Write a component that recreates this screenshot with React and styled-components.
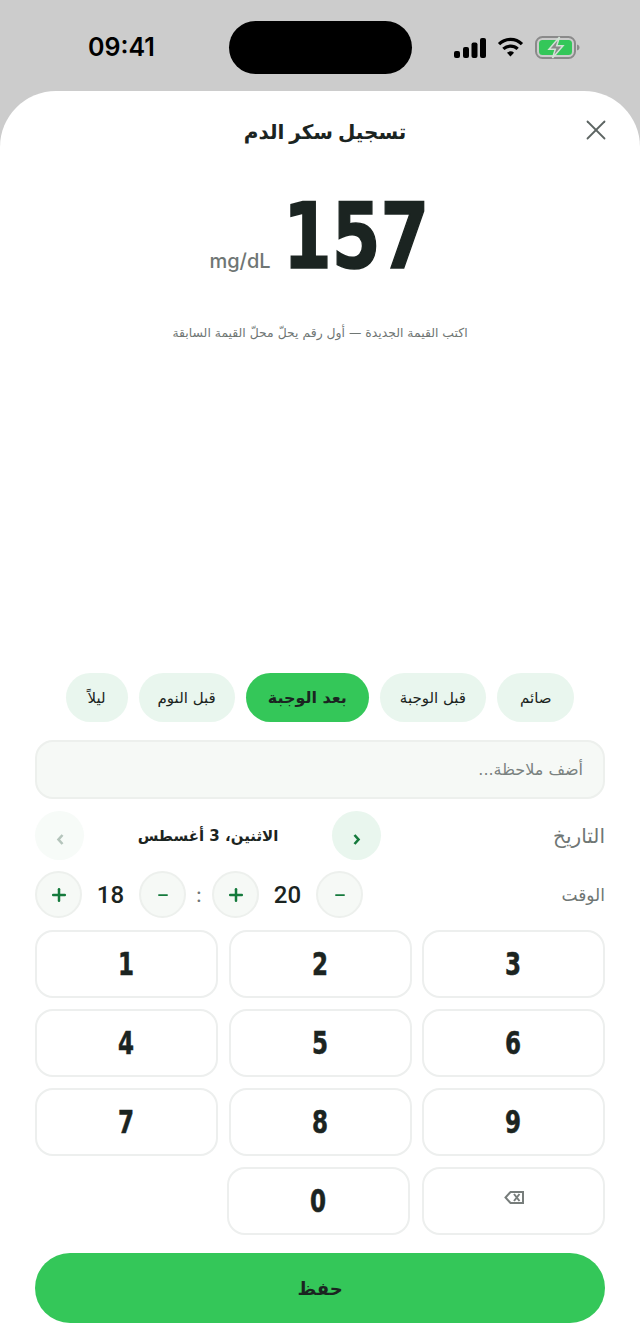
import React from "react";
import styled, { createGlobalStyle } from "styled-components";
import { X, Plus, Minus } from "lucide-react";

const GlobalStyle = createGlobalStyle`
  * { box-sizing: border-box; }
  html, body { margin: 0; padding: 0; background: #cccccc; }
  body { font-family: "DejaVu Sans", "Noto Sans", sans-serif; }
`;

const Screen = styled.div`
  width: 640px;
  height: 1343px;
  background: #cccccc;
  display: flex;
  flex-direction: column;
  overflow: hidden;
`;

const StatusBar = styled.div`
  height: 91px;
  flex-shrink: 0;
  display: flex;
  align-items: flex-start;
  padding-top: 21px;
  direction: ltr;
`;

const Clock = styled.div`
  width: 229px;
  padding-left: 14px;
  text-align: center;
  font-family: Inter, sans-serif;
  font-size: 25px;
  font-weight: 600;
  line-height: 53px;
  color: #000;
`;

const Island = styled.div`
  width: 183px;
  height: 53px;
  border-radius: 27px;
  background: #000;
`;

const StatusIcons = styled.div`
  flex: 1;
  height: 53px;
  display: flex;
  align-items: center;
  gap: 11px;
  padding-left: 42px;
`;

const Sheet = styled.div`
  flex: 1;
  background: #fff;
  border-radius: 56px 56px 0 0;
  padding: 0 35px 20px;
  display: flex;
  flex-direction: column;
  direction: rtl;
`;

const SheetHeader = styled.div`
  height: 81px;
  padding-left: 10px;
  position: relative;
  display: flex;
  align-items: center;
  justify-content: center;
`;

const Title = styled.h1`
  margin: 0;
  font-size: 20px;
  font-weight: 700;
  word-spacing: -2px;
  color: #1b2421;
`;

const CloseButton = styled.div`
  position: absolute;
  right: -8px;
  top: 22px;
  color: #5c6462;
  display: flex;
`;

const Reading = styled.div`
  direction: ltr;
  display: flex;
  align-items: baseline;
  justify-content: center;
  gap: 12px;
  height: 120px;
  padding-top: 10px;
  padding-right: 7px;
`;

const Unit = styled.span`
  font-family: Inter, sans-serif;
  font-size: 20px;
  font-weight: 500;
  color: #6f7674;
`;

// condensed heavy digits: no narrow bold family is installed, so squeeze the glyphs
const Value = styled.span`
  display: inline-block;
  width: 141px;
  font-family: "DejaVu Sans", sans-serif;
  font-stretch: condensed;
  font-size: 91px;
  line-height: 110px;
  font-weight: 700;
  white-space: nowrap;
  color: #1b2421;
  -webkit-text-stroke: 1.5px #1b2421;
  transform: scaleX(0.855);
  transform-origin: left center;
`;

const Hint = styled.p`
  margin: 31px 0 0;
  text-align: center;
  font-size: 12.4px;
  line-height: 20px;
  color: #6f7674;
`;

const Spacer = styled.div`
  flex: 1;
`;

const Chips = styled.div`
  display: flex;
  justify-content: center;
  gap: 11px;
  margin-bottom: 18px;
`;

const Chip = styled.div`
  height: 49px;
  padding: 0 ${(p) => p.$pad}px;
  border-radius: 25px;
  display: flex;
  align-items: center;
  font-size: ${(p) => (p.$active ? 16 : 15)}px;
  font-weight: ${(p) => (p.$active ? 700 : 400)};
  background: ${(p) => (p.$active ? "#34c759" : "#e9f6ee")};
  color: #1b2421;
`;

const Note = styled.div`
  height: 59px;
  border-radius: 18px;
  border: 2px solid #edf0ed;
  background: #f6f9f6;
  padding: 0 20px;
  display: flex;
  align-items: center;
  font-size: 16px;
  color: #7a8280;
  margin-bottom: 12px;
`;

const FieldRow = styled.div`
  height: ${(p) => p.$h}px;
  display: flex;
  align-items: center;
  justify-content: space-between;
  margin-bottom: ${(p) => p.$mb}px;
`;

const FieldLabel = styled.span`
  font-size: ${(p) => p.$size}px;
  font-weight: 500;
  color: #6f7674;
`;

const DatePicker = styled.div`
  width: 346px;
  display: flex;
  align-items: center;
  justify-content: space-between;
`;

const DateArrow = styled.div`
  width: 49px;
  height: 49px;
  padding-top: 8px;
  border-radius: 50%;
  display: flex;
  align-items: center;
  justify-content: center;
  background: ${(p) => (p.$off ? "#f7fbf8" : "#e9f6ee")};
  color: ${(p) => (p.$off ? "#b5c5bc" : "#157a3c")};
`;

const DateText = styled.span`
  font-size: 15px;
  font-weight: 700;
  color: #1b2421;
`;

const TimePicker = styled.div`
  direction: ltr;
  width: 329px;
  display: flex;
  align-items: center;
`;

const StepButton = styled.div`
  width: 47px;
  height: 47px;
  border-radius: 50%;
  border: 2px solid #edf0ed;
  background: #f6f9f6;
  color: #157a3c;
  display: flex;
  align-items: center;
  justify-content: center;
  flex-shrink: 0;
`;

const TimeValue = styled.span`
  width: 57px;
  text-align: center;
  font-family: Roboto, sans-serif;
  font-size: 24px;
  font-weight: 500;
  color: #1b2421;
`;

const TimeColon = styled.span`
  width: 26px;
  text-align: center;
  font-family: Inter, sans-serif;
  font-size: 20px;
  color: #6f7674;
`;

const KeyGrid = styled.div`
  direction: ltr;
  display: grid;
  grid-template-columns: repeat(3, 183px);
  grid-auto-rows: 68px;
  justify-content: space-between;
  row-gap: 11px;
  margin-bottom: 11px;
`;

const LastRow = styled.div`
  direction: ltr;
  display: flex;
  justify-content: flex-end;
  gap: 12px;
  margin-bottom: 18px;
`;

const Key = styled.div`
  width: 183px;
  height: 68px;
  border-radius: 18px;
  border: 2px solid #edefee;
  background: #fff;
  display: flex;
  align-items: center;
  justify-content: center;
`;

const BackKey = styled(Key)`
  padding-bottom: 8px;
`;

const KeyDigit = styled.span`
  font-family: "DejaVu Sans", sans-serif;
  font-stretch: condensed;
  font-size: 32px;
  font-weight: 700;
  color: #1b2421;
  -webkit-text-stroke: 0.5px #1b2421;
  transform: scaleX(0.8);
`;

const SaveButton = styled.div`
  height: 70px;
  border-radius: 35px;
  background: #34c759;
  display: flex;
  align-items: center;
  justify-content: center;
  font-size: 18px;
  font-weight: 700;
  color: #1b2421;
`;

const Signal = () => (
  <svg width="32" height="20" viewBox="0 0 32 20">
    <rect x="0" y="13" width="6" height="7" rx="2" fill="#000" />
    <rect x="9" y="9" width="6" height="11" rx="2" fill="#000" />
    <rect x="17.500" y="4.500" width="6" height="15.500" rx="2" fill="#000" />
    <rect x="26" y="0" width="6" height="20" rx="2" fill="#000" />
  </svg>
);

const Wifi = () => (
  <svg width="27" height="21" viewBox="0 0 27 22" fill="none" stroke="#000" strokeWidth="3.4">
    <path d="M1.500 7.500a17 17 0 0 1 24 0" />
    <path d="M6 12.500a11 11 0 0 1 15 0" />
    <path d="M9.800 16.600l3.700 3.700 3.700-3.700a5.200 5.200 0 0 0-7.400 0z" fill="#000" stroke="none" />
  </svg>
);

const Battery = () => (
  <svg width="45" height="23" viewBox="0 0 45 23">
    <rect x="1" y="1" width="39" height="21" rx="6.500" fill="none" stroke="#8a8a8a" strokeWidth="2" />
    <rect x="4" y="4" width="33" height="15" rx="3.500" fill="#34c759" />
    <path d="M42 8.500c1.500.4 2.500 1.500 2.500 3s-1 2.600-2.500 3z" fill="#8a8a8a" />
    <path d="M24.500 1 14 13.200h6.300L17.500 22 28 9.800h-6.300z" fill="#8a8a8a" stroke="#d2e2d6" strokeWidth="1.500" />
  </svg>
);

const Backspace = () => (
  <svg width="20" height="13" viewBox="0 0 20 13" fill="none" stroke="#777d7b" strokeWidth="2">
    <path d="M6.500 1H19v11H6.500L1.500 6.500z" />
    <path d="M10 3l5.500 7M15.500 3L10 10" />
  </svg>
);

const NextGlyph = () => (
  <svg width="8" height="11" viewBox="0 0 8 11" fill="none" stroke="currentColor" strokeWidth="2.600">
    <path d="M1.500 1l4 4.500-4 4.500" />
  </svg>
);

const PrevGlyph = () => (
  <svg width="8" height="11" viewBox="0 0 8 11" fill="none" stroke="currentColor" strokeWidth="2.600">
    <path d="M6.500 1l-4 4.500 4 4.500" />
  </svg>
);

const chips = [
  { label: "صائم", pad: 23 },
  { label: "قبل الوجبة", pad: 20 },
  { label: "بعد الوجبة", pad: 22, active: true },
  { label: "قبل النوم", pad: 19 },
  { label: "ليلاً", pad: 22 },
];

function App() {
  return (
    <Screen>
      <GlobalStyle />
      <StatusBar>
        <Clock>09:41</Clock>
        <Island />
        <StatusIcons>
          <Signal />
          <Wifi />
          <Battery />
        </StatusIcons>
      </StatusBar>
      <Sheet>
        <SheetHeader>
          <Title>تسجيل سكر الدم</Title>
          <CloseButton>
            <X size={34} strokeWidth={1.25} />
          </CloseButton>
        </SheetHeader>
        <Reading>
          <Unit>mg/dL</Unit>
          <Value>157</Value>
        </Reading>
        <Hint>اكتب القيمة الجديدة — أول رقم يحلّ محلّ القيمة السابقة</Hint>
        <Spacer />
        <Chips>
          {chips.map((c) => (
            <Chip key={c.label} $active={c.active} $pad={c.pad}>
              {c.label}
            </Chip>
          ))}
        </Chips>
        <Note>أضف ملاحظة...</Note>
        <FieldRow $h={49} $mb={11}>
          <FieldLabel $size={20}>التاريخ</FieldLabel>
          <DatePicker>
            <DateArrow>
              <NextGlyph />
            </DateArrow>
            <DateText>الاثنين، 3 أغسطس</DateText>
            <DateArrow $off>
              <PrevGlyph />
            </DateArrow>
          </DatePicker>
        </FieldRow>
        <FieldRow $h={47} $mb={12}>
          <FieldLabel $size={17}>الوقت</FieldLabel>
          <TimePicker>
            <StepButton><Plus size={20} strokeWidth={3} /></StepButton>
            <TimeValue>18</TimeValue>
            <StepButton><Minus size={14} strokeWidth={3} /></StepButton>
            <TimeColon>:</TimeColon>
            <StepButton><Plus size={20} strokeWidth={3} /></StepButton>
            <TimeValue>20</TimeValue>
            <StepButton><Minus size={14} strokeWidth={3} /></StepButton>
          </TimePicker>
        </FieldRow>
        <KeyGrid>
          {[1, 2, 3, 4, 5, 6, 7, 8, 9].map((n) => (
            <Key key={n}><KeyDigit>{n}</KeyDigit></Key>
          ))}
        </KeyGrid>
        <LastRow>
          <Key><KeyDigit>0</KeyDigit></Key>
          <BackKey><Backspace /></BackKey>
        </LastRow>
        <SaveButton>حفظ</SaveButton>
      </Sheet>
    </Screen>
  );
}

export default App;
